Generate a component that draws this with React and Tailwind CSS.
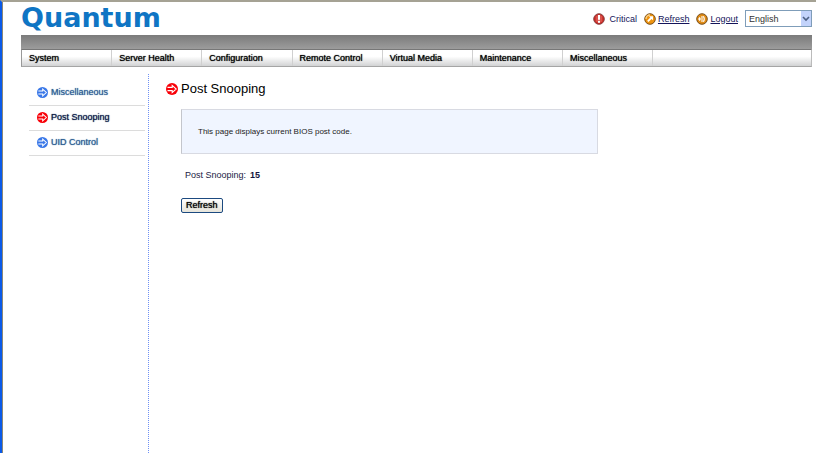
import { useState } from "react";

const menuItems = [
  "System",
  "Server Health",
  "Configuration",
  "Remote Control",
  "Virtual Media",
  "Maintenance",
  "Miscellaneous",
];

const sideItems = [
  { label: "Miscellaneous", active: false },
  { label: "Post Snooping", active: true },
  { label: "UID Control", active: false },
];

const ArrowIcon = ({ color, className }) => (
  <svg viewBox="0 0 12 12" className={className} aria-hidden="true">
    <circle cx="6" cy="6" r="6" fill={color} />
    <path
      d="M1.5 4.4H6.2V2.4L10.2 6 6.2 9.6V7.6H1.5"
      fill="none"
      stroke="#fff"
      strokeWidth="1.1"
    />
  </svg>
);

const CriticalIcon = () => (
  <svg viewBox="0 0 12 12" className="size-3" aria-hidden="true">
    <circle cx="6" cy="6" r="5.3" fill="#c8201c" stroke="#8a4a4a" strokeWidth="1" />
    <path d="M2.6 3.2Q6 .6 9.4 3.2V8.4Q6 11 2.6 8.4Z" fill="#d9534d" />
    <rect x="5" y="2" width="2" height="4.8" fill="#fff" />
    <rect x="5" y="7.8" width="2" height="2" fill="#fff" />
  </svg>
);

const RefreshIcon = () => (
  <svg viewBox="0 0 12 12" className="size-3" aria-hidden="true">
    <circle cx="6" cy="6" r="5.3" fill="#ee9410" stroke="#6e4411" strokeWidth="0.9" />
    <path d="M2 6A4 4 0 0 1 6 2" fill="none" stroke="#fbd28a" strokeWidth="1.4" />
    <path d="M4.9 3.2H9V7.2L7.6 5.9 4.4 9 3.2 7.8 6.3 4.6Z" fill="#fff" />
  </svg>
);

const LogoutIcon = () => (
  <svg viewBox="0 0 12 12" className="size-3" aria-hidden="true">
    <circle cx="6" cy="6" r="5.3" fill="#e08c16" stroke="#6e4411" strokeWidth="0.9" />
    <path d="M2 6H5M3.6 4.3V7.7" stroke="#fff" strokeWidth="1.2" />
    <path
      d="M6 3V9M7.4 3.2Q9.2 6 7.4 8.8"
      fill="none"
      stroke="#fff"
      strokeWidth="1.1"
    />
  </svg>
);

const Header = () => {
  const [language, setLanguage] = useState("English");

  return (
    <header className="flex h-[33px] items-start justify-between">
      <div className="font-['DejaVu_Sans',sans-serif] text-[27px] leading-[32px] font-bold text-[#0f75c4]">
        Quantum
      </div>
      <div className="flex items-center gap-[7px] pt-2 text-[#14145a]">
        <span className="flex items-center gap-1">
          <CriticalIcon />
          Critical
        </span>
        <a href="#refresh" className="flex items-center gap-[2px] underline">
          <RefreshIcon />
          Refresh
        </a>
        <a href="#logout" className="flex items-center gap-[2px] underline">
          <LogoutIcon />
          Logout
        </a>
        <div className="relative">
          <select
            aria-label="Language"
            value={language}
            onChange={(e) => setLanguage(e.target.value)}
            className="block h-[17px] w-[67px] appearance-none border border-[#7f9db9] bg-white pl-[3px] text-[#333]"
          >
            <option>English</option>
          </select>
          <span className="pointer-events-none absolute top-px right-px flex h-[15px] w-[10px] items-center justify-center bg-[#c3d3fb]">
            <svg viewBox="0 0 8 6" className="h-[6px] w-2" aria-hidden="true">
              <path d="M1 1L4 4 7 1" fill="none" stroke="#4d6185" strokeWidth="1.6" />
            </svg>
          </span>
        </div>
      </div>
    </header>
  );
};

const MenuBar = () => (
  <nav>
    <div className="h-[14px] bg-linear-to-b from-[#7b7b7b] to-[#9c9c9c]" />
    <div className="border border-t-[#777] border-r-[#bbb] border-b-[#a5a5a5] border-l-[#999] bg-linear-to-b from-white from-40% to-[#d2d3d4]">
      <ul className="grid w-4/5 grid-cols-7">
        {menuItems.map((item) => (
          <li key={item} className="border-r border-[#d0d0d0]">
            <a
              href="#menu"
              className="block pt-px pl-[7px] leading-[15px] text-black [text-shadow:0_0_1px_currentColor]"
            >
              {item}
            </a>
          </li>
        ))}
      </ul>
    </div>
  </nav>
);

const Sidebar = () => (
  <aside className="w-[124px] shrink-0 pt-[7px] pl-2">
    <ul>
      {sideItems.map(({ label, active }) => (
        <li key={label} className="border-b border-[#dcdcdc]">
          <a
            href="#page"
            className={
              active
                ? "flex h-6 items-center gap-[3px] pb-[2px] pl-2 text-[#0c1c48] [text-shadow:0_0_1px_currentColor]"
                : "flex h-6 items-center gap-[3px] pb-[2px] pl-2 text-[#2d5f94] [text-shadow:0_0_1px_currentColor]"
            }
          >
            <ArrowIcon
              color={active ? "#f80008" : "#3a78e8"}
              className="size-[11px]"
            />
            {label}
          </a>
        </li>
      ))}
    </ul>
  </aside>
);

const App = () => {
  return (
    <div className="flex min-h-screen flex-col border-t-2 border-l-2 border-t-[#a5a294] border-l-[#0a5ae8] bg-white font-['Liberation_Sans',Arial,sans-serif] text-[9px] leading-3">
      <div className="flex grow flex-col border-l border-[#8a8878] pr-1 pl-[18px]">
        <Header />
        <MenuBar />

        <div className="mt-[7px] flex grow">
          <Sidebar />

          {/* Dotted divider */}
          <div className="mx-[3px] border-l border-dotted border-[#6f90f5]" />

          <main className="grow pt-[7px] pl-[14px]">
            <h1 className="flex items-center gap-[3px] text-[13px] leading-4 text-black">
              <ArrowIcon color="#f80008" className="size-3" />
              Post Snooping
            </h1>

            <div className="pl-[15px]">
              <p className="mt-3 max-w-[417px] border border-[#d8dae2] border-l-[#c4c6cc] bg-[#f0f5ff] px-4 py-[15px] text-[8px] leading-[13px] text-[#222]">
                This page displays current BIOS post code.
              </p>
              <p className="mt-[15px] pl-1 text-[#222244]">
                Post Snooping:
                <b className="ml-1 text-[#14143c]">15</b>
              </p>
              <button
                type="button"
                className="mt-[17px] block rounded-[2px] border border-[#1c4a80] bg-linear-to-b from-white to-[#e6e4da] px-1 leading-[13px] text-black [text-shadow:0_0_1px_currentColor]"
              >
                Refresh
              </button>
            </div>
          </main>
        </div>
      </div>
    </div>
  );
};

export default App;
